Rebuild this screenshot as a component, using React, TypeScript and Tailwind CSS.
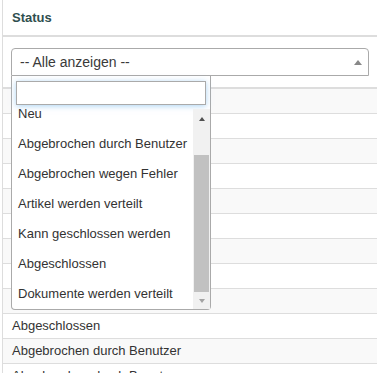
import React from "react";

// rows 1-9 lie under the open dropdown, so their text is not visible
const rows = [
  "",
  "",
  "",
  "",
  "",
  "",
  "",
  "",
  "",
  "Abgeschlossen",
  "Abgebrochen durch Benutzer",
  "Abgebrochen durch Benutzer",
];

const options = [
  "-- Alle anzeigen --",
  "Neu",
  "Abgebrochen durch Benutzer",
  "Abgebrochen wegen Fehler",
  "Artikel werden verteilt",
  "Kann geschlossen werden",
  "Abgeschlossen",
  "Dokumente werden verteilt",
];

const App = () => {
  return (
    <div
      className="h-[373px] w-[379px] overflow-hidden bg-white pl-[2px] text-[13px] text-[#333]"
      style={{ fontFamily: '"Liberation Sans", Arial, sans-serif' }}
    >
      <div className="relative w-[375px] border-l border-[#ddd]">
        {/* header */}
        <div className="flex h-[35px] items-center pl-[9px] font-bold text-[#2f4f4f]">Status</div>
        <div className="h-[2px] bg-[#ddd]" />

        {/* filter row */}
        <div className="h-[50px] px-[8px] pt-[11px]">
          <div className="flex h-[28px] items-center justify-between rounded-t-[4px] border border-[#aaa] pl-[8px] pr-[6px] text-[14px] text-[#3a3a3a]">
            <span>-- Alle anzeigen --</span>
            <span className="h-0 w-0 border-x-[4px] border-b-[5px] border-x-transparent border-b-[#888]" />
          </div>
        </div>
        <div className="h-[2px] bg-[#ddd]" />

        {/* body rows */}
        {rows.map((r, i) => (
          <div
            key={i}
            className={
              "flex h-[25px] items-center border-b border-[#ddd] pl-[9px] " +
              (i % 2 === 0 ? "bg-[#f9f9f9]" : "bg-white")
            }
          >
            {r}
          </div>
        ))}

        {/* open dropdown */}
        <div className="absolute left-[8px] top-[76px] w-[200px] rounded-b-[4px] border-x border-b border-[#aaa] bg-white">
          <div className="px-[4px] pb-[4px] pt-[5px]">
            <div className="h-[24px] border border-[#aaa] bg-white shadow-[0_1px_6px_rgba(102,175,233,0.55)]" />
          </div>
          <div className="flex h-[200px]">
            <div className="flex-1 overflow-hidden">
              <div className="mt-[-40px]">
                {options.map((o) => (
                  <div key={o} className="flex h-[30px] items-center whitespace-nowrap pl-[6px] text-[13px] text-[#333]">
                    {o}
                  </div>
                ))}
              </div>
            </div>
            {/* scrollbar */}
            <div className="flex w-[17px] flex-col bg-[#f1f1f1]">
              <div className="flex h-[17px] items-center justify-center pt-[2px]">
                <span className="h-0 w-0 border-x-[3.5px] border-b-[4px] border-x-transparent border-b-[#505050]" />
              </div>
              <div className="flex-1 px-[1px] pt-[29px]">
                <div className="h-full bg-[#c1c1c1]" />
              </div>
              <div className="flex h-[17px] items-center justify-center">
                <span className="h-0 w-0 border-x-[3.5px] border-t-[4px] border-x-transparent border-t-[#a3a3a3]" />
              </div>
            </div>
          </div>
        </div>
      </div>
    </div>
  );
};

export default App;
